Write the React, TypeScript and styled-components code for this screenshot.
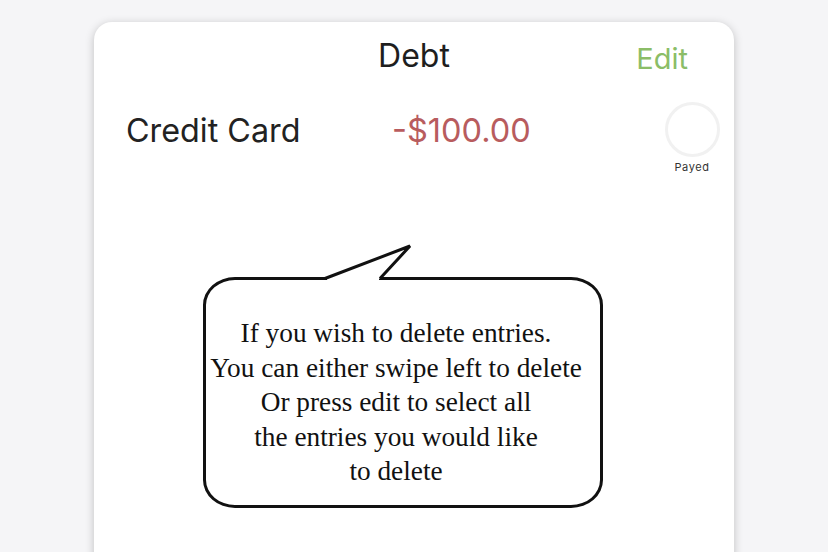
import React from "react";
import styled, { createGlobalStyle } from "styled-components";

const GlobalStyle = createGlobalStyle`
  html, body {
    margin: 0;
    padding: 0;
    overflow: hidden;
    background: #f5f5f7;
  }
`;

const Page = styled.div`
  padding-top: 22px;
  display: flex;
  justify-content: center;
`;

const Card = styled.div`
  width: 640px;
  height: 560px;
  background: #fff;
  border-radius: 18px;
  box-shadow: 0 2px 10px rgba(0, 0, 0, 0.22);
  box-sizing: border-box;
  padding-top: 13px;
  font-family: Inter, "Noto Sans", sans-serif;
`;

const Header = styled.div`
  display: grid;
  grid-template-columns: 1fr auto 1fr;
  align-items: center;
  padding: 0 46px;
`;

const Title = styled.div`
  grid-column: 2;
  font-size: 32px;
  line-height: 36px;
  color: #1e1e1e;
`;

const EditButton = styled.button`
  grid-column: 3;
  justify-self: end;
  background: none;
  border: none;
  padding: 0;
  margin-top: 6px;
  font-family: inherit;
  font-size: 29px;
  line-height: 36px;
  color: #8bbd67;
  cursor: pointer;
`;

const EntryRow = styled.div`
  display: flex;
  align-items: flex-start;
  margin-top: 25px;
  padding-left: 32px;
`;

const EntryName = styled.div`
  width: 266px;
  padding-top: 9px;
  font-size: 32.3px;
  line-height: 40px;
  color: #222;
`;

const Amount = styled.div<{ $negative?: boolean }>`
  flex: 1;
  padding-top: 9px;
  font-size: 32.5px;
  line-height: 40px;
  color: ${(p) => (p.$negative ? "#b85c5e" : "#5a9a4a")};
`;

const Status = styled.div`
  width: 60px;
  margin-right: 12px;
  display: flex;
  flex-direction: column;
  align-items: center;
`;

const Toggle = styled.div`
  width: 55px;
  height: 55px;
  box-sizing: border-box;
  border-radius: 50%;
  border: 3px solid #f1f1f1;
`;

const StatusLabel = styled.div`
  margin-top: 3px;
  font-size: 11px;
  line-height: 14px;
  letter-spacing: 0.6px;
  color: #333;
`;

const Bubble = styled.div`
  position: relative;
  margin: 103px 0 0 109px;
  width: 400px;
  height: 231px;
  box-sizing: border-box;
  border: 3px solid #111;
  border-radius: 32px / 28px;
  padding: 36px 14px 0 0;
  text-align: center;
  font-family: "Liberation Serif", serif;
  font-size: 27.3px;
  line-height: 34.5px;
  color: #111;
`;

const Tail = styled.svg`
  position: absolute;
  left: 107px;
  top: -39px;
  overflow: visible;
`;

const App = () => {
  return (
    <>
      <GlobalStyle />
      <Page>
        <Card>
          <Header>
            <Title>Debt</Title>
            <EditButton>Edit</EditButton>
          </Header>
          <EntryRow>
            <EntryName>Credit Card</EntryName>
            <Amount $negative>-$100.00</Amount>
            <Status>
              <Toggle />
              <StatusLabel>Payed</StatusLabel>
            </Status>
          </EntryRow>
          <Bubble>
            <Tail width="110" height="40" viewBox="0 0 110 40">
              <rect x="14" y="34" width="52" height="6" fill="#fff" />
              <path
                d="M12 37.5 L97 5 L67 37.5"
                fill="#fff"
                stroke="#111"
                strokeWidth="3"
                strokeLinejoin="miter"
              />
            </Tail>
            If you wish to delete entries.
            <br />
            You can either swipe left to delete
            <br />
            Or press edit to select all
            <br />
            the entries you would like
            <br />
            to delete
          </Bubble>
        </Card>
      </Page>
    </>
  );
};

export default App;
